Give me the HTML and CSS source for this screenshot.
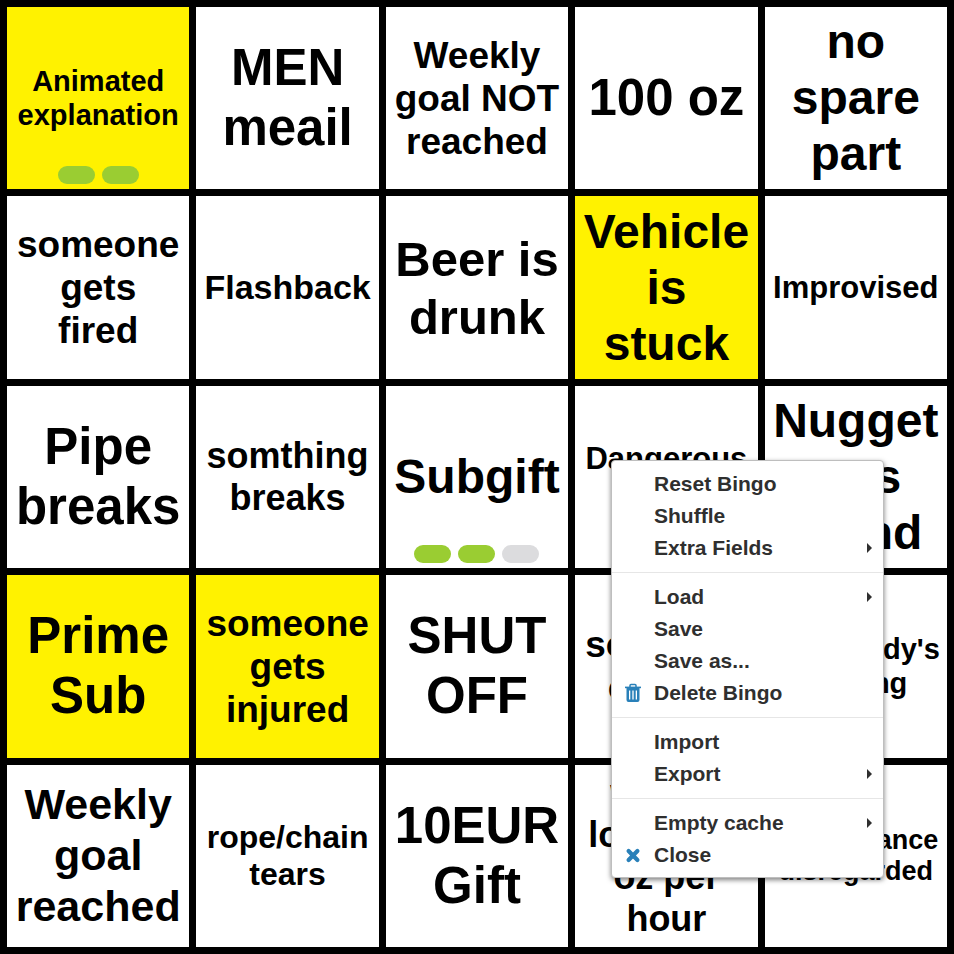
FILE: index.html
```
<!DOCTYPE html>
<html lang="en">
<head>
<meta charset="utf-8">
<meta name="viewport" content="width=device-width, initial-scale=1">
<title>Bingo</title>
<link rel="stylesheet" href="styles.css">
</head>
<body>
<main class="board">
  <button class="cell marked size-29" type="button">Animated<br>explanation<span class="pills"><span class="pill on"></span><span class="pill on"></span></span></button>
  <button class="cell size-51" type="button">MEN<br>meail</button>
  <button class="cell size-37" type="button">Weekly<br>goal NOT<br>reached</button>
  <button class="cell size-51" type="button">100 oz</button>
  <button class="cell size-48" type="button">no<br>spare<br>part</button>

  <button class="cell size-37" type="button">someone<br>gets<br>fired</button>
  <button class="cell size-34" type="button">Flashback</button>
  <button class="cell size-49" type="button">Beer is<br>drunk</button>
  <button class="cell marked size-48" type="button">Vehicle<br>is<br>stuck</button>
  <button class="cell size-31" type="button">Improvised</button>

  <button class="cell size-51" type="button">Pipe<br>breaks</button>
  <button class="cell size-36" type="button">somthing<br>breaks</button>
  <button class="cell size-48" type="button">Subgift<span class="pills"><span class="pill on"></span><span class="pill on"></span><span class="pill"></span></span></button>
  <button class="cell size-31" type="button">Dangerous<br>action</button>
  <button class="cell size-48" type="button">Nugget<br>was<br>found</button>

  <button class="cell marked size-51" type="button">Prime<br>Sub</button>
  <button class="cell marked size-37" type="button">someone<br>gets<br>injured</button>
  <button class="cell size-51" type="button">SHUT<br>OFF</button>
  <button class="cell size-37" type="button">someone<br>cheats</button>
  <button class="cell size-29" type="button">somebody's<br>singing</button>

  <button class="cell size-43" type="button">Weekly<br>goal<br>reached</button>
  <button class="cell size-32" type="button">rope/chain<br>tears</button>
  <button class="cell size-51" type="button">10EUR<br>Gift</button>
  <button class="cell size-36" type="button">we are<br>losing 50<br>oz per<br>hour</button>
  <button class="cell size-27" type="button">maintenance<br>disregarded</button>
</main>

<nav class="menu" aria-label="Bingo menu">
  <button class="item" type="button">Reset Bingo</button>
  <button class="item" type="button">Shuffle</button>
  <button class="item submenu" type="button">Extra Fields</button>
  <hr class="separator">
  <button class="item submenu" type="button">Load</button>
  <button class="item" type="button">Save</button>
  <button class="item" type="button">Save as...</button>
  <button class="item" type="button"><svg class="icon" viewBox="0 0 18 20" aria-hidden="true"><path d="M6 4V2.500Q6 1.500 7 1.500h4q1 0 1 1V4" fill="none" stroke="currentColor" stroke-width="1.500"/><path d="M1 3.600h16v1.600H1z" fill="currentColor"/><path fill-rule="evenodd" d="M2.500 5h13v12q0 2-2 2h-9q-2 0-2-2zM5 7.500v9h1.300v-9zM8.350 7.500v9h1.300v-9zM11.700 7.500v9H13v-9z" fill="currentColor"/></svg>Delete Bingo</button>
  <hr class="separator">
  <button class="item" type="button">Import</button>
  <button class="item submenu" type="button">Export</button>
  <hr class="separator">
  <button class="item submenu" type="button">Empty cache</button>
  <button class="item" type="button"><svg class="icon" viewBox="0 0 18 20" aria-hidden="true"><path d="M4.600 6.100l8.800 8.800M13.400 6.100l-8.800 8.800" fill="none" stroke="currentColor" stroke-width="4.200" stroke-linecap="round"/></svg>Close</button>
</nav>
</body>
</html>
```
FILE: styles.css
```
* {
  box-sizing: border-box;
}

body {
  margin: 0;
  background: #000;
  font-family: "Liberation Sans", Arial, sans-serif;
  font-weight: bold;
}

button {
  border: 0;
  border-radius: 0;
  background: #fff;
  color: #000;
  font-family: inherit;
  font-weight: inherit;
}

.board {
  display: grid;
  grid-template-columns: repeat(5, minmax(0, 1fr));
  grid-auto-rows: minmax(0, 1fr);
  gap: 7px;
  min-height: 100vh;
  padding: 7px;
}

.cell {
  position: relative;
  padding: 0;
  text-align: center;
  white-space: nowrap;
}

.marked {
  background: #fff200;
}

.size-27 { font-size: 27px; line-height: 31px; }
.size-29 { font-size: 29px; line-height: 34px; }
.size-31 { font-size: 31px; line-height: 37px; }
.size-32 { font-size: 32px; line-height: 37px; }
.size-34 { font-size: 34px; line-height: 39px; }
.size-36 { font-size: 36px; line-height: 42px; }
.size-37 { font-size: 37px; line-height: 43px; }
.size-43 { font-size: 43px; line-height: 51px; }
.size-48 { font-size: 48px; line-height: 56px; }
.size-49 { font-size: 49px; line-height: 58px; }
.size-51 { font-size: 51px; line-height: 60px; }

/* Progress markers lie over the bottom of a cell */
.pills {
  position: absolute;
  right: 0;
  bottom: 5px;
  left: 0;
  display: flex;
  justify-content: center;
  gap: 7px;
}

.pill {
  width: 37px;
  height: 18px;
  border-radius: 9px;
  background: #dcdcde;
}

.on {
  background: #9acd32;
}

.menu {
  position: absolute;
  top: 460px;
  left: 611px;
  width: 273px;
  padding: 7px 0 6px;
  border: 1px solid #bebebe;
  border-radius: 4px;
  background: #fff;
  box-shadow: 0 2px 5px rgba(0, 0, 0, 0.5);
}

.item {
  position: relative;
  display: flex;
  align-items: center;
  width: 100%;
  height: 32px;
  padding: 0 42px;
  background: transparent;
  color: #2f2f2f;
  font-size: 21px;
  text-align: left;
}

.icon {
  position: absolute;
  left: 12px;
  width: 18px;
  height: 20px;
  color: #2980b9;
}

.submenu::after {
  content: "";
  position: absolute;
  right: 11px;
  border: 5px solid transparent;
  border-right-width: 0;
  border-left-color: #2f2f2f;
}

.separator {
  height: 1px;
  margin: 8px 0;
  border: 0;
  background: #e6e6e6;
}
```
